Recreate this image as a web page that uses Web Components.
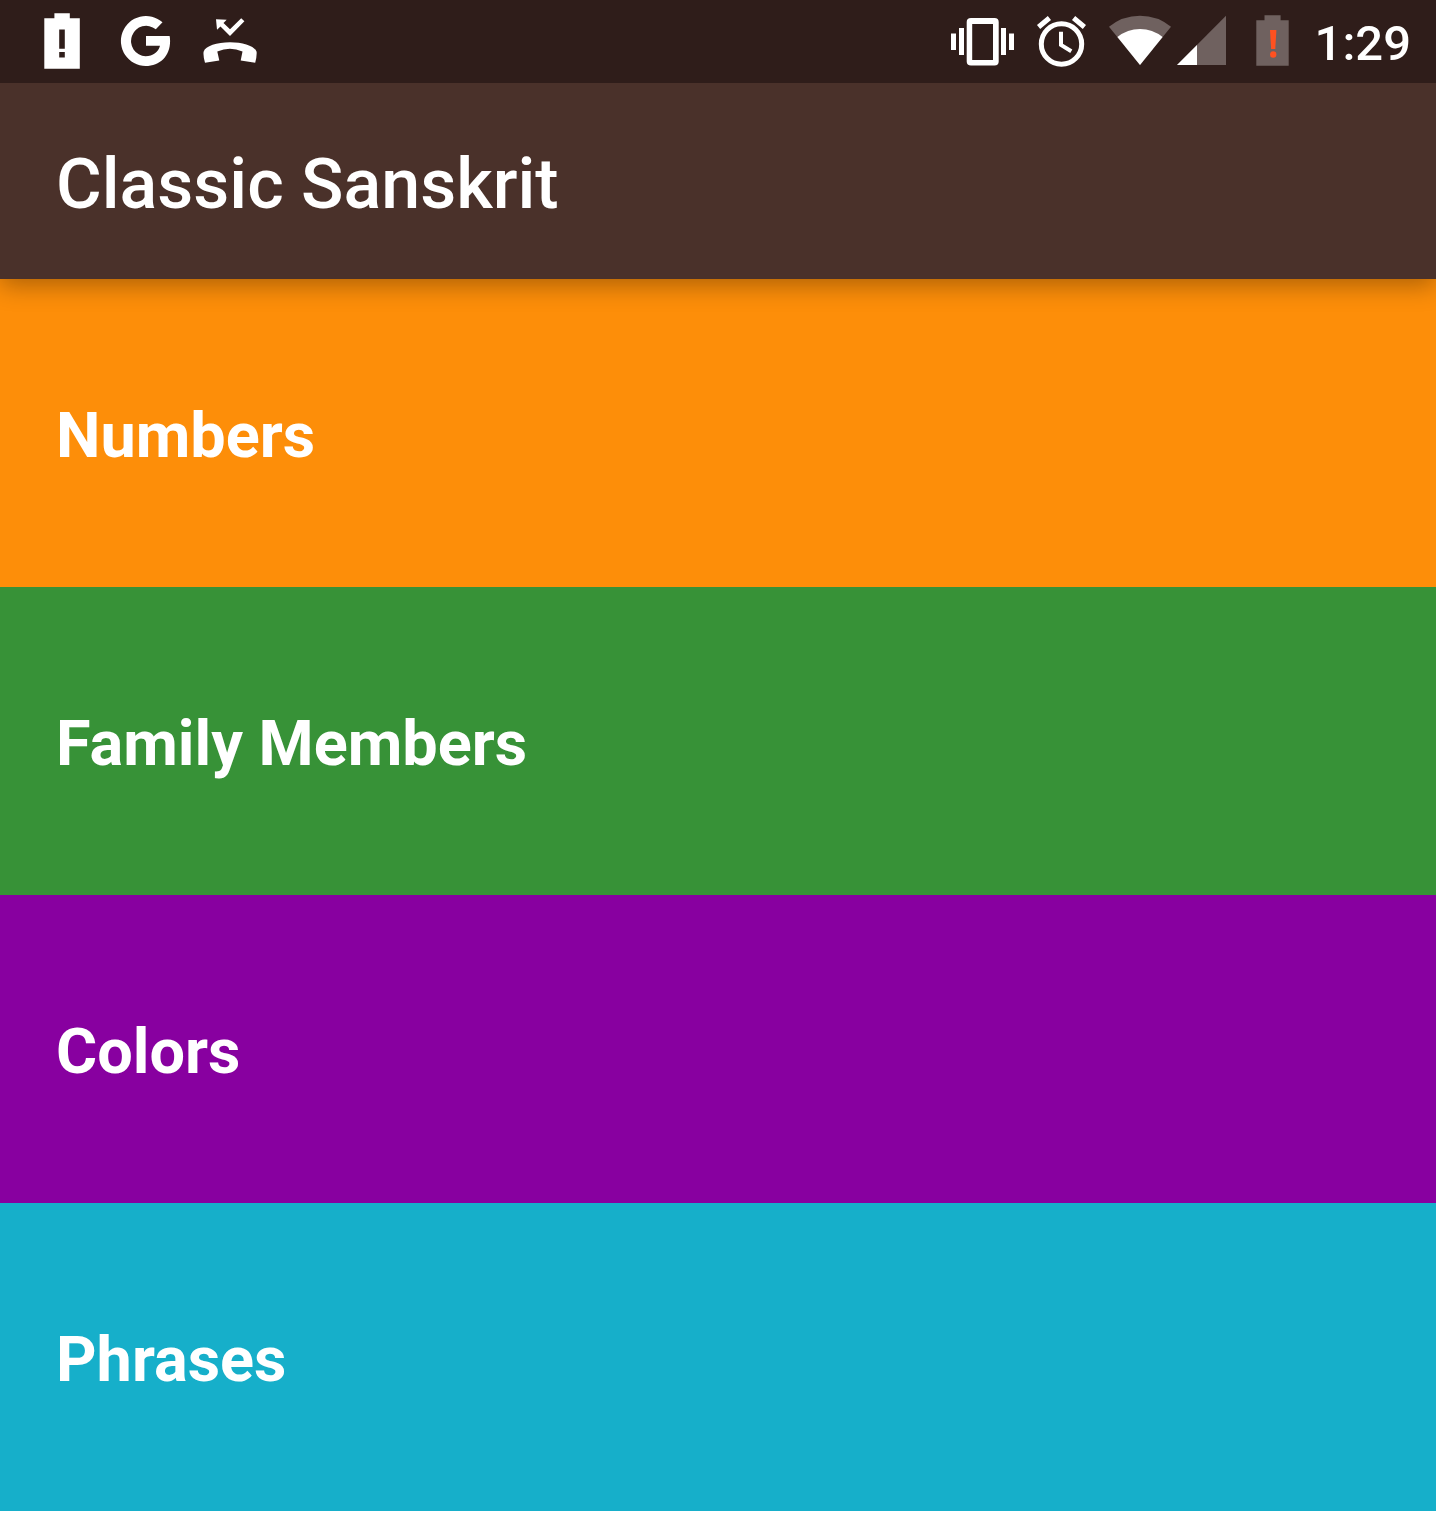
<!DOCTYPE html>
<html lang="en">
<head>
<meta charset="utf-8">
<meta name="viewport" content="width=device-width, initial-scale=1">
<title>Classic Sanskrit</title>
<style>
  body { margin: 0; background: #fff; color: #fff; font-family: Roboto, "Liberation Sans", sans-serif; }
</style>
</head>
<body>
<sanskrit-app></sanskrit-app>
<script>
  const define = (name, html) => {
    const template = document.createElement('template');
    template.innerHTML = html;
    customElements.define(name, class extends HTMLElement {
      constructor() {
        super();
        this.attachShadow({ mode: 'open' }).append(template.content.cloneNode(true));
      }
    });
  };

  // Icons: each drawing has its own width and shares the bar's height.
  const ICONS = {
    'battery-alert': ['0 0 84 83', '<path fill-rule="evenodd" d="M24.3 18.3H34.4V13.3H49.8V18.3H59.8V68.8H24.3ZM39.2 29.5V48.7H44.8V29.5ZM39.2 52V57.6H44.8V52Z"/>'],
    'google': ['0 0 84 83', '<path d="M58.5 22.3A25 25 0 1 0 41.6 66C56 66 66.1 56 66.1 41Q66.1 38 65.6 36H42V45.7H56C54.5 52 49 56.2 41.6 56.2A15.2 15.2 0 1 1 51.8 29.2Z"/>'],
    'missed-call': ['0 0 84 83', '<path d="M28 19.3 38.7 19.8 35.5 23 42 29.3 53.2 18.2 56.4 21.3 42 36 32.5 26.4 29 29.8ZM17 62.7Q15 56 15.6 51.7C17.5 46 29 42.3 42 42.3S66.5 46 68.6 51.7Q69 56 67.2 62.7L52.7 60.5 54.5 51.5Q42 46 29.3 51.5L31.3 60.5Z"/>'],
    'vibrate': ['0 0 80 83', '<path d="M8 33.5H13V50H8ZM16 28H21V55H16ZM58 28H63V55H58ZM66 33.5H71V50H66Z"/><path fill-rule="evenodd" d="M28 18H51.5Q55.7 18 55.7 22V61.5Q55.7 65.5 51.5 65.5H28Q23.7 65.5 23.7 61.5V22Q23.7 18 28 18ZM29.2 24V60H50V24Z"/>'],
    'alarm': ['0 0 80 83', '<g fill="none" stroke="#fff"><circle cx="38.5" cy="44" r="20.2" stroke-width="5"/><path stroke-width="4" d="M38 31.7V45L48.3 51.3"/><path stroke-width="5" d="M15.6 27 26.4 18M50.6 18 61.4 27"/></g>'],
    'wifi': ['0 0 72 83', '<path fill="#6f615f" d="M37 65 6 26.7Q19.5 15.7 37 15.7T68 26.7Z"/><path d="M37 65 14.4 37Q24.5 29 37 29T59.6 37Z"/>'],
    'signal': ['0 0 72 83', '<path fill="#6f615f" d="M2 65 51 15.7V65Z"/><path d="M2 65 22 45V65Z"/>'],
    'battery-low': ['0 0 68 83', '<path fill="#6f615f" d="M9.3 20.2H17.5V15.2H33.6V20.2H41.7V65.7H9.3Z"/><g fill="#ff5120"><path d="M23 30H29.4L28.3 49H24.1Z"/><circle cx="26.2" cy="54.5" r="3.2"/></g>']
  };

  customElements.define('status-icon', class extends HTMLElement {
    connectedCallback() {
      const [box, art] = ICONS[this.getAttribute('name')];
      const [, , width, height] = box.split(' ');
      this.attachShadow({ mode: 'open' }).innerHTML =
        `<style>:host { display: block; flex: none; } svg { display: block; fill: #fff; }</style>
         <svg viewBox="${box}" width="${width}" height="${height}" aria-hidden="true">${art}</svg>`;
    }
  });

  define('status-bar', `
    <style>
      :host { display: flex; justify-content: space-between; height: 83px; padding: 0 25px 0 20px; background: #2f1d1a; }
      div { display: flex; align-items: center; }
      time { padding-top: 4px; font-size: 49px; line-height: 58px; font-weight: 500; }
    </style>
    <div>
      <status-icon name="battery-alert"></status-icon>
      <status-icon name="google"></status-icon>
      <status-icon name="missed-call"></status-icon>
    </div>
    <div>
      <status-icon name="vibrate"></status-icon>
      <status-icon name="alarm"></status-icon>
      <status-icon name="wifi"></status-icon>
      <status-icon name="signal"></status-icon>
      <status-icon name="battery-low"></status-icon>
      <time>1:29</time>
    </div>`);

  define('app-toolbar', `
    <style>
      :host { display: flex; align-items: center; position: relative; height: 196px; padding: 0 56px;
              box-sizing: border-box; background: #4a312a; box-shadow: 0 6px 24px rgba(0, 0, 0, .32);
              clip-path: inset(0 0 -40px 0); }
      h1 { margin: 0; padding-top: 6px; font-size: 70px; line-height: 82px; font-weight: 500; }
    </style>
    <h1><slot></slot></h1>`);

  define('category-item', `
    <style>
      :host { display: block; background: var(--tint); }
      a { display: flex; align-items: center; min-height: 308px; padding: 5px 56px 0; box-sizing: border-box;
          color: inherit; text-decoration: none; font-size: 63px; line-height: 74px; font-weight: 700; }
    </style>
    <a href="#"><slot></slot></a>`);

  define('sanskrit-app', `
    <style>
      :host { display: flex; flex-direction: column; }
      nav { display: flex; flex-direction: column; }
      .numbers { --tint: #fd8e09; }
      .family { --tint: #379237; }
      .colors { --tint: #8800a0; }
      .phrases { --tint: #16afca; }
    </style>
    <status-bar></status-bar>
    <app-toolbar>Classic Sanskrit</app-toolbar>
    <nav>
      <category-item class="numbers">Numbers</category-item>
      <category-item class="family">Family Members</category-item>
      <category-item class="colors">Colors</category-item>
      <category-item class="phrases">Phrases</category-item>
    </nav>`);
</script>
</body>
</html>
